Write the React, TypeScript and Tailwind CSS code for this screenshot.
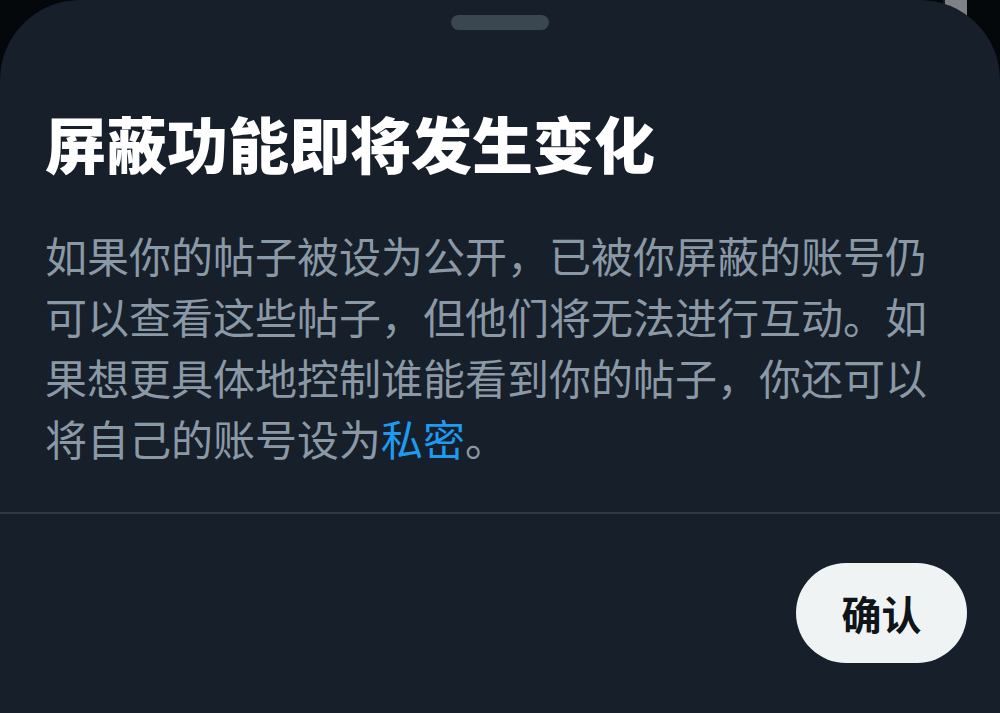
export default function App() {
  return (
    <div
      className="relative h-[713px] w-full overflow-hidden bg-[#05080b]"
      style={{ fontFamily: '"Noto Sans CJK SC", "Noto Sans", sans-serif' }}
    >
      {/* bit of the page behind the sheet */}
      <div className="absolute left-[943px] top-0 h-[24px] w-[24px] border-l-2 border-[#1a1d20] bg-[#7e8286]" />

      <div className="relative flex h-full flex-col rounded-t-[80px] bg-[#161f2a]">
        <div className="flex justify-center pt-[15px]">
          <div className="h-[15px] w-[98px] rounded-full bg-[#3a4650]" />
        </div>

        <h1 className="mt-[77px] px-[45px] text-[61px] font-black leading-[72px] text-white">
          屏蔽功能即将发生变化
        </h1>

        <p className="mt-[45px] px-[45px] text-[42px] leading-[61px] text-[#8b98a5]">
          如果你的帖子被设为公开，已被你屏蔽的账号仍可以查看这些帖子，但他们将无法进行互动。如果想更具体地控制谁能看到你的帖子，你还可以将自己的账号设为
          <span className="text-[#1d9bf0]">私密</span>。
        </p>

        <div className="mt-[44px] h-[2px] w-full bg-[#2f3a44]" />

        <div className="mt-[49px] flex justify-end pr-[33px]">
          <button className="flex h-[100px] w-[171px] items-center justify-center rounded-full bg-[#eff3f4] text-[40px] font-bold text-[#0f1419]">
            确认
          </button>
        </div>
      </div>
    </div>
  )
}
